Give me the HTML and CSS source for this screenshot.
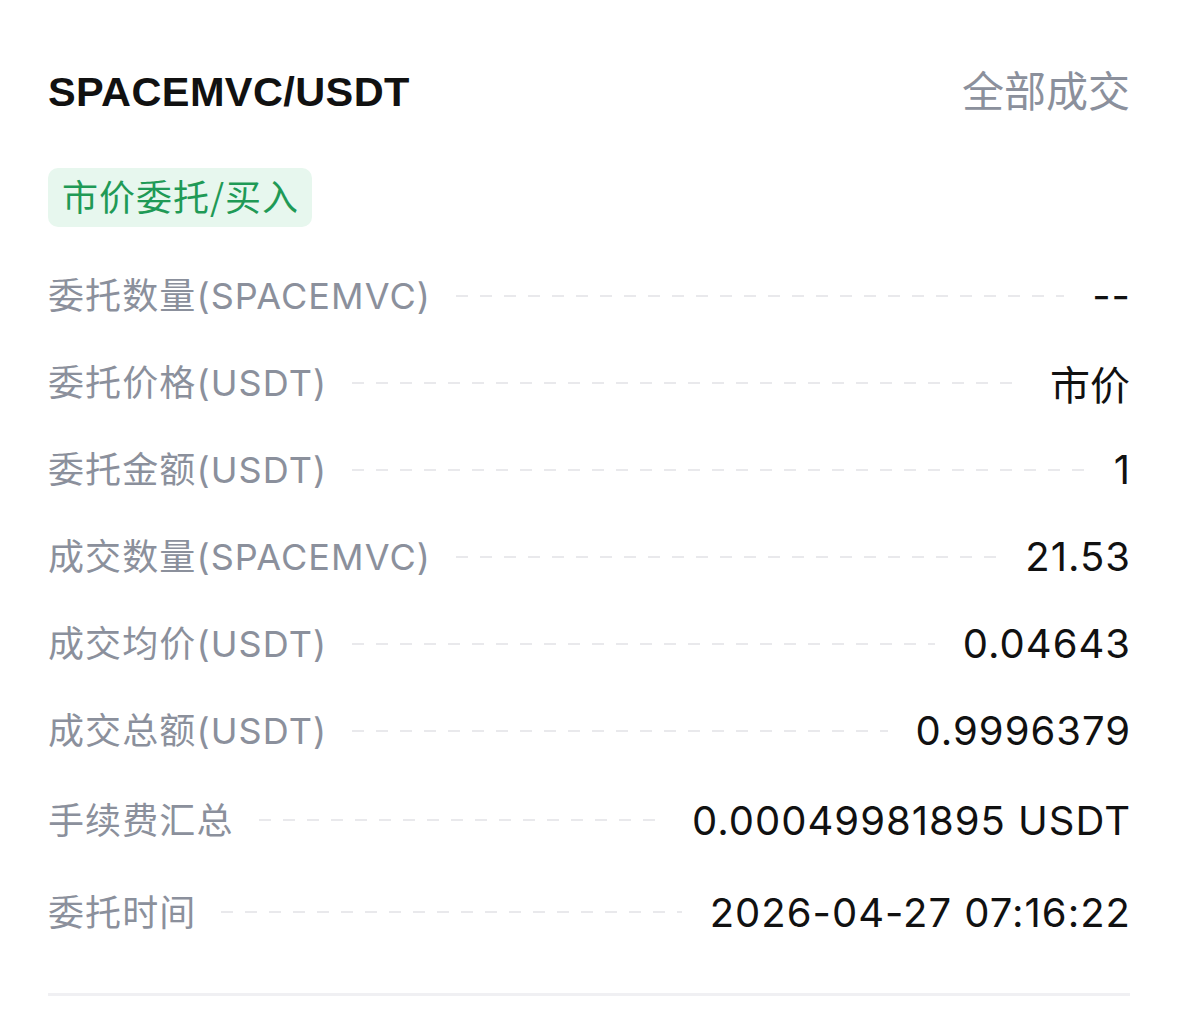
FILE: index.html
```html
<!DOCTYPE html>
<html lang="zh-CN">
<head>
<meta charset="UTF-8">
<meta name="viewport" content="width=device-width, initial-scale=1.0">
<title>委托详情</title>
<link rel="stylesheet" href="styles.css">
</head>
<body>
<div class="order">
  <!-- Header -->
  <div class="order-head">
    <h1 class="pair">SPACEMVC/USDT</h1>
    <span class="status">全部成交</span>
  </div>

  <span class="tag tag-buy">市价委托/买入</span>

  <!-- Detail rows -->
  <ul class="details">
    <li class="row">
      <span class="label">委托数量(SPACEMVC)</span>
      <span class="dots"></span>
      <span class="value">--</span>
    </li>
    <li class="row">
      <span class="label">委托价格(USDT)</span>
      <span class="dots"></span>
      <span class="value value-cn">市价</span>
    </li>
    <li class="row">
      <span class="label">委托金额(USDT)</span>
      <span class="dots"></span>
      <span class="value">1</span>
    </li>
    <li class="row">
      <span class="label">成交数量(SPACEMVC)</span>
      <span class="dots"></span>
      <span class="value">21.53</span>
    </li>
    <li class="row">
      <span class="label">成交均价(USDT)</span>
      <span class="dots"></span>
      <span class="value">0.04643</span>
    </li>
    <li class="row">
      <span class="label">成交总额(USDT)</span>
      <span class="dots"></span>
      <span class="value">0.9996379</span>
    </li>
    <li class="row row-tall">
      <span class="label">手续费汇总</span>
      <span class="dots"></span>
      <span class="value">0.00049981895 USDT</span>
    </li>
    <li class="row row-tall">
      <span class="label">委托时间</span>
      <span class="dots"></span>
      <span class="value">2026-04-27 07:16:22</span>
    </li>
  </ul>

  <div class="divider"></div>
</div>
</body>
</html>
```

FILE: styles.css
```css
body {
  margin: 0;
  padding: 0;
  background-color: #fff;
  color: #111;
  font-family: Inter, "Noto Sans CJK SC", sans-serif;
}

.order {
  padding: 62px 49px 0 48px;
}

.order-head {
  display: flex;
  align-items: center;
  justify-content: space-between;
  height: 60px;
}

.pair {
  margin: 0;
  font-family: "Liberation Sans", sans-serif;
  font-size: 41.5px;
  font-weight: 700;
  letter-spacing: 0.4px;
  color: #111;
}

.status {
  padding-bottom: 7px;
  font-family: "Noto Sans CJK SC", sans-serif;
  font-size: 42px;
  color: #8b909c;
}

.tag {
  display: inline-flex;
  align-items: center;
  height: 59px;
  margin-top: 46px;
  padding: 0 13px 5px 14px;
  box-sizing: border-box;
  border-radius: 10px;
  font-family: "Noto Sans CJK SC", sans-serif;
  font-size: 36px;
  letter-spacing: 1px;
}

.tag-buy {
  background-color: #e7f7ee;
  color: #1f9a56;
}

.details {
  list-style-type: none;
  margin: 25px 0 0;
  padding: 0;
}

.row {
  display: flex;
  align-items: center;
  height: 87px;
}

.row-tall {
  height: 92px;
}

.label {
  padding-bottom: 5px;
  font-size: 36px;
  letter-spacing: 1.1px;
  color: #8b909c;
  white-space: nowrap;
}

.dots {
  flex: 1;
  height: 2px;
  margin: 0 28px 0 25px;
  background-image: linear-gradient(to right, #e9e9ec 12px, transparent 12px);
  background-size: 24px 2px;
  background-repeat: repeat-x;
}

.value {
  font-size: 40px;
  letter-spacing: 1px;
  margin-right: -1px;
  color: #111;
  white-space: nowrap;
}

.value-cn {
  font-family: "Noto Sans CJK SC", sans-serif;
  letter-spacing: 0;
  margin-right: 0;
}

.divider {
  height: 3px;
  margin-top: 35px;
  background-color: #f0f0f3;
}
```
